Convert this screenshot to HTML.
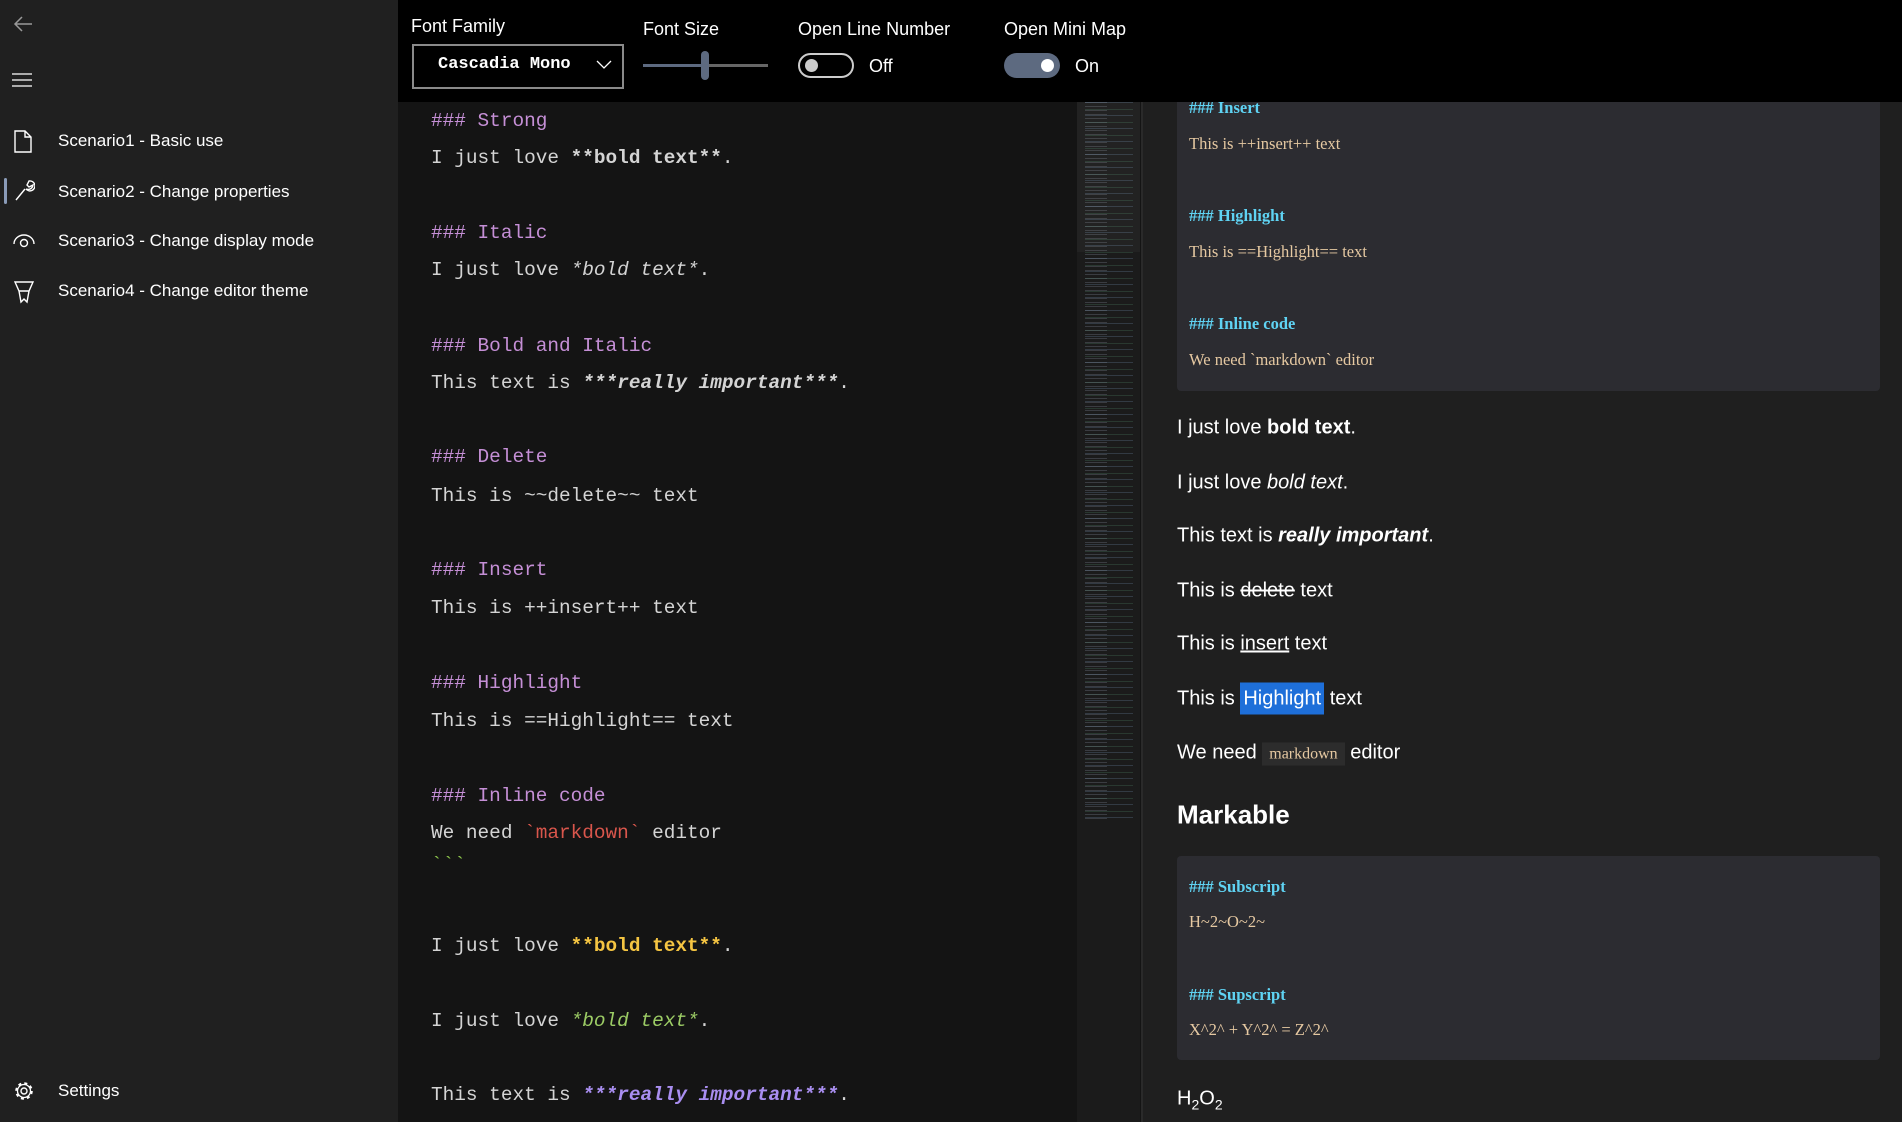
<!DOCTYPE html>
<html><head><meta charset="utf-8"><style>
*{margin:0;padding:0;box-sizing:border-box}
body{width:1902px;height:1122px;overflow:hidden;background:#141414;font-family:"Liberation Sans",sans-serif;position:relative;color:#fff}
.abs{position:absolute;white-space:nowrap}
#side{position:absolute;left:0;top:0;width:398px;height:1122px;background:#202020}
.nav{font-size:17px;color:#fff;transform:translateY(-50%)}
#top{position:absolute;left:398px;top:0;width:1504px;height:102px;background:#000}
.lbl{font-size:18px;color:#fff}
.mono{font-family:"Liberation Mono","DejaVu Sans Mono",monospace;font-size:19.4px;color:#d4d4d4;transform:translateY(-50%)}
.h{color:#c58fd6}
#mini{position:absolute;left:1077px;top:102px;width:63px;height:1020px;background:#1b1b1b}
#div{position:absolute;left:1141px;top:102px;width:2px;height:1020px;background:#2a2a2a}
#prev{position:absolute;left:1143px;top:102px;width:759px;height:1020px;background:#1f1f1f;overflow:hidden}
.blk{position:absolute;left:34px;width:703px;background:#2c2c31;border-radius:4px}
.ser{font-family:"Liberation Serif",serif;font-size:16.5px;color:#e6c9a2;transform:translateY(-50%)}
.sh{color:#5fd3f3;font-weight:bold}
.p{font-size:20px;color:#fff;transform:translateY(-50%)}
</style></head><body>
<div id="side">
 <svg class="abs" style="left:12px;top:14px" width="22" height="20" viewBox="0 0 22 20"><path d="M20 10H3M10 3L3 10l7 7" stroke="#999" stroke-width="1.5" fill="none"/></svg>
 <svg class="abs" style="left:12px;top:73px" width="22" height="14"><path d="M0 1h20M0 7h20M0 13h20" stroke="#fff" stroke-width="1.3"/></svg>
 <svg class="abs" style="left:13px;top:130px" width="20" height="24" viewBox="0 0 20 24"><path d="M2 1h10l6 6v15H2zM12 1v6h6" stroke="#fff" stroke-width="1.4" fill="none"/></svg>
 <div class="abs nav" style="left:58px;top:141px">Scenario1 - Basic use</div>
 <div class="abs" style="left:4px;top:178px;width:3px;height:26px;background:#8a9bb8;border-radius:2px"></div>
 <svg class="abs" style="left:13px;top:179px" width="22" height="24" viewBox="0 0 22 24"><path d="M3 21l9-11M13 10a5 5 0 1 0 3-8l-2 4 2 2 4-2a5 5 0 0 1-7 4z" stroke="#fff" stroke-width="1.4" fill="none"/></svg>
 <div class="abs nav" style="left:58px;top:192px">Scenario2 - Change properties</div>
 <svg class="abs" style="left:13px;top:232px" width="22" height="18" viewBox="0 0 22 18"><path d="M1 12a10 9 0 0 1 20 0" stroke="#fff" stroke-width="1.4" fill="none"/><circle cx="11" cy="11" r="3.5" stroke="#fff" stroke-width="1.4" fill="none"/></svg>
 <div class="abs nav" style="left:58px;top:241px">Scenario3 - Change display mode</div>
 <svg class="abs" style="left:13px;top:280px" width="22" height="24" viewBox="0 0 22 24"><path d="M2 2h18l-4 9h-10zM6 11l2 11 3-3 3 3 2-11" stroke="#fff" stroke-width="1.4" fill="none"/></svg>
 <div class="abs nav" style="left:58px;top:291px">Scenario4 - Change editor theme</div>
 <svg class="abs" style="left:13px;top:1080px" width="22" height="22" viewBox="0 0 22 22"><circle cx="11" cy="11" r="3" stroke="#fff" stroke-width="1.4" fill="none"/><circle cx="11" cy="11" r="7.5" stroke="#fff" stroke-width="2.6" stroke-dasharray="2.9 3" fill="none"/><circle cx="11" cy="11" r="6.5" stroke="#fff" stroke-width="1.3" fill="none"/></svg>
 <div class="abs nav" style="left:58px;top:1091px">Settings</div>
</div>
<div id="top">
 <div class="abs lbl" style="left:13px;top:16px">Font Family</div>
 <div class="abs" style="left:14px;top:44px;width:212px;height:45px;border:2px solid #8a8a8a"></div>
 <div class="abs" style="left:40px;top:55px;font-family:'Liberation Mono',monospace;font-weight:bold;font-size:17px">Cascadia Mono</div>
 <svg class="abs" style="left:198px;top:60px" width="16" height="10"><path d="M1 1l7 7 7-7" stroke="#fff" stroke-width="1.3" fill="none"/></svg>
 <div class="abs lbl" style="left:245px;top:19px">Font Size</div>
 <div class="abs" style="left:245px;top:64px;width:125px;height:3px;background:#666"></div>
 <div class="abs" style="left:245px;top:64px;width:62px;height:3px;background:#5d6a80"></div>
 <div class="abs" style="left:303px;top:51px;width:8px;height:29px;border-radius:4px;background:#5d6a80"></div>
 <div class="abs lbl" style="left:400px;top:19px">Open Line Number</div>
 <div class="abs" style="left:400px;top:53px;width:56px;height:25px;border:2px solid #ccc;border-radius:13px"></div>
 <div class="abs" style="left:407px;top:59px;width:13px;height:13px;border-radius:50%;background:#ccc"></div>
 <div class="abs lbl" style="left:471px;top:56px">Off</div>
 <div class="abs lbl" style="left:606px;top:19px">Open Mini Map</div>
 <div class="abs" style="left:606px;top:53px;width:56px;height:25px;border-radius:13px;background:#5d6a80"></div>
 <div class="abs" style="left:643px;top:59px;width:13px;height:13px;border-radius:50%;background:#fff"></div>
 <div class="abs lbl" style="left:677px;top:56px">On</div>
</div>
<div class="abs mono h" style="left:431px;top:121px">### Strong</div>
<div class="abs mono" style="left:431px;top:158px">I just love <b>**bold text**</b>.</div>
<div class="abs mono h" style="left:431px;top:233px">### Italic</div>
<div class="abs mono" style="left:431px;top:270px">I just love <i>*bold text*</i>.</div>
<div class="abs mono h" style="left:431px;top:346px">### Bold and Italic</div>
<div class="abs mono" style="left:431px;top:383px">This text is <b><i>***really important***</i></b>.</div>
<div class="abs mono h" style="left:431px;top:457px">### Delete</div>
<div class="abs mono" style="left:431px;top:496px">This is ~~delete~~ text</div>
<div class="abs mono h" style="left:431px;top:570px">### Insert</div>
<div class="abs mono" style="left:431px;top:608px">This is ++insert++ text</div>
<div class="abs mono h" style="left:431px;top:683px">### Highlight</div>
<div class="abs mono" style="left:431px;top:721px">This is ==Highlight== text</div>
<div class="abs mono h" style="left:431px;top:796px">### Inline code</div>
<div class="abs mono" style="left:431px;top:833px">We need <span style="color:#d9564c">&#96;markdown&#96;</span> editor</div>
<div class="abs mono" style="left:431px;top:865px;color:#8bc34a">&#96;&#96;&#96;</div>
<div class="abs mono" style="left:431px;top:946px">I just love <b style="color:#f5c542">**bold text**</b>.</div>
<div class="abs mono" style="left:431px;top:1021px">I just love <i style="color:#9ccc65">*bold text*</i>.</div>
<div class="abs mono" style="left:431px;top:1095px">This text is <b><i style="color:#a98ef0">***really important***</i></b>.</div>
<div id="mini">
 <div style="position:absolute;left:8px;top:0;width:48px;height:720px;background:repeating-linear-gradient(180deg,rgba(110,140,170,.28) 0 1px,transparent 1px 7px,rgba(90,160,120,.22) 7px 8px,transparent 8px 13px);"></div>
 <div style="position:absolute;left:8px;top:0;width:22px;height:720px;background:repeating-linear-gradient(180deg,rgba(150,160,180,.25) 0 1px,transparent 1px 4px)"></div>
 <div style="position:absolute;left:0;top:0;width:63px;height:150px;background:rgba(255,255,255,.03)"></div>
</div>
<div id="div"></div>
<div id="prev">
 <div class="blk" style="top:-10px;height:299px"></div>
 <div class="abs ser sh" style="left:46px;top:6px">### Insert</div>
 <div class="abs ser" style="left:46px;top:42px">This is ++insert++ text</div>
 <div class="abs ser sh" style="left:46px;top:114px">### Highlight</div>
 <div class="abs ser" style="left:46px;top:150px">This is ==Highlight== text</div>
 <div class="abs ser sh" style="left:46px;top:222px">### Inline code</div>
 <div class="abs ser" style="left:46px;top:258px">We need &#96;markdown&#96; editor</div>
 <div class="abs p" style="left:34px;top:326px">I just love <b>bold text</b>.</div>
 <div class="abs p" style="left:34px;top:381px">I just love <i>bold text</i>.</div>
 <div class="abs p" style="left:34px;top:434px">This text is <b><i>really important</i></b>.</div>
 <div class="abs p" style="left:34px;top:489px">This is <s>delete</s> text</div>
 <div class="abs p" style="left:34px;top:542px">This is <u>insert</u> text</div>
 <div class="abs p" style="left:34px;top:597px">This is <span style="background:#1e6fd9;padding:5px 3px">Highlight</span> text</div>
 <div class="abs p" style="left:34px;top:651px">We need <span style="background:#2c2c2c;font-family:'Liberation Serif',serif;font-size:16px;color:#e6c9a2;padding:3px 7px">markdown</span> editor</div>
 <div class="abs p" style="left:34px;top:713px;font-weight:bold;font-size:26px">Markable</div>
 <div class="blk" style="top:754px;height:204px"></div>
 <div class="abs ser sh" style="left:46px;top:785px">### Subscript</div>
 <div class="abs ser" style="left:46px;top:820px">H~2~O~2~</div>
 <div class="abs ser sh" style="left:46px;top:893px">### Supscript</div>
 <div class="abs ser" style="left:46px;top:928px">X^2^ + Y^2^ = Z^2^</div>
 <div class="abs p" style="left:34px;top:998px">H<sub style="font-size:14px">2</sub>O<sub style="font-size:14px">2</sub></div>
</div>
</body></html>
